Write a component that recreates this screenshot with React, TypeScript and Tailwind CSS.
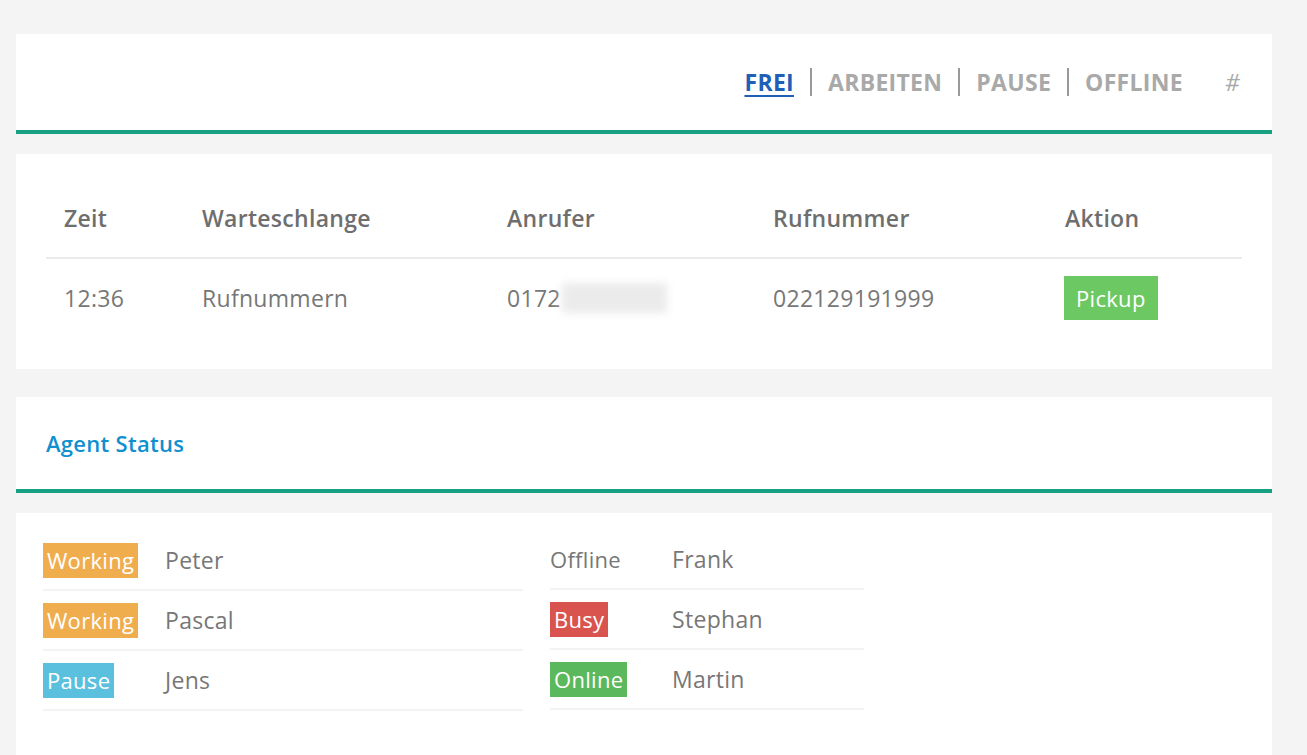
import React from "react";

const font = { fontFamily: "'Open Sans', Lato, Arial, sans-serif" };

type Agent = { status: string; name: string };

const badgeClass: Record<string, string> = {
  Working: "bg-[#f0ad4e] text-white px-1",
  Pause: "bg-[#5bc0de] text-white px-1",
  Busy: "bg-[#d9534f] text-white px-1",
  Online: "bg-[#5cb85c] text-white px-1",
  Offline: "text-[#777]",
};

const leftAgents: Agent[] = [
  { status: "Working", name: "Peter" },
  { status: "Working", name: "Pascal" },
  { status: "Pause", name: "Jens" },
];

const rightAgents: Agent[] = [
  { status: "Offline", name: "Frank" },
  { status: "Busy", name: "Stephan" },
  { status: "Online", name: "Martin" },
];

function AgentRow({ agent }: { agent: Agent }) {
  return (
    <div className="flex h-[60px] items-center border-b-2 border-[#f3f3f3]">
      <div className="w-[122px] shrink-0">
        <span className={`inline-block h-[35px] leading-[35px] text-[22px] ${badgeClass[agent.status]}`}>
          {agent.status}
        </span>
      </div>
      <span className="text-[23px] text-[#777]">{agent.name}</span>
    </div>
  );
}

export default function App() {
  return (
    <div className="min-h-screen bg-[#f4f4f4] pl-4 pr-[35px] pt-[34px] tracking-[0.3px]" style={font}>
      {/* Status nav */}
      <div className="flex h-[100px] items-center justify-end border-b-4 border-[#18a083] bg-white pr-8">
        <div className="flex items-center text-[23px] font-bold">
          <a className="text-[#1f5fb8] underline underline-offset-4">FREI</a>
          <span className="mx-4 h-[28px] w-[2px] bg-[#999]" />
          <span className="text-[#a9a9a9]">ARBEITEN</span>
          <span className="mx-4 h-[28px] w-[2px] bg-[#999]" />
          <span className="text-[#a9a9a9]">PAUSE</span>
          <span className="mx-4 h-[28px] w-[2px] bg-[#999]" />
          <span className="text-[#a9a9a9]">OFFLINE</span>
          <span className="ml-[42px] font-normal italic text-[#a9a9a9]">#</span>
        </div>
      </div>

      {/* Queue table */}
      <div className="mt-5 bg-white px-[30px] pb-[32px] pt-[26px]">
        <div className="grid h-[79px] grid-cols-[138px_305px_266px_292px_1fr] items-center border-b-2 border-[#ebebeb] text-[23px] font-semibold text-[#6e6e6e]">
          <div className="pl-[18px]">Zeit</div>
          <div className="pl-[18px]">Warteschlange</div>
          <div className="pl-[18px]">Anrufer</div>
          <div className="pl-[18px]">Rufnummer</div>
          <div className="pl-[18px]">Aktion</div>
        </div>
        <div className="grid h-[78px] grid-cols-[138px_305px_266px_292px_1fr] items-center text-[23px] text-[#777]">
          <div className="pl-[18px]">12:36</div>
          <div className="pl-[18px]">Rufnummern</div>
          <div className="flex items-center pl-[18px]">
            0172
            <span className="ml-px h-[30px] w-[105px] bg-[#ebebeb] blur-[4px]" />
          </div>
          <div className="pl-[18px]">022129191999</div>
          <div className="pl-[17px]">
            <button className="h-[44px] bg-[#6cc862] px-3 text-[22px] text-white">Pickup</button>
          </div>
        </div>
      </div>

      {/* Agent status header */}
      <div className="mt-[28px] flex h-[96px] items-center border-b-4 border-[#18a083] bg-white pl-[30px]">
        <h2 className="text-[22px] font-semibold text-[#1190d0]">Agent Status</h2>
      </div>

      {/* Agent list */}
      <div className="mt-5 flex gap-[27px] bg-white pb-14 pl-[27px] pt-[18px]">
        <div className="w-[480px]">
          {leftAgents.map((a) => (
            <AgentRow key={a.name} agent={a} />
          ))}
        </div>
        <div className="-mt-px w-[314px]">
          {rightAgents.map((a) => (
            <AgentRow key={a.name} agent={a} />
          ))}
        </div>
      </div>
    </div>
  );
}
